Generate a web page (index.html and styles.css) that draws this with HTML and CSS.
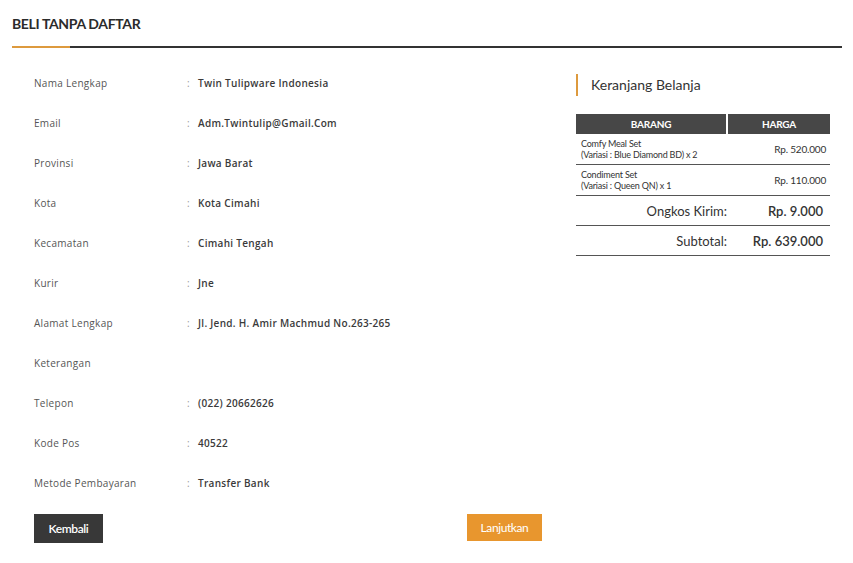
FILE: index.html
```html
<!DOCTYPE html>
<html>
  <head>
    <meta charset="utf-8">
    <title>Beli Tanpa Daftar</title>
    <link rel="stylesheet" href="styles.css">
  </head>
  <body>
    <div class="page">
      <!-- judul -->
      <div class="title-bar">
        <h2>BELI TANPA DAFTAR</h2>
        <div class="rule"><span class="rule-accent"></span><span class="rule-rest"></span></div>
      </div>

      <div class="content">
        <!-- data pembeli -->
        <div class="form-col">
          <div class="row"><span class="label">Nama Lengkap</span><span class="colon">:</span><span class="value">Twin Tulipware Indonesia</span></div>
          <div class="row"><span class="label">Email</span><span class="colon">:</span><span class="value">Adm.Twintulip@Gmail.Com</span></div>
          <div class="row"><span class="label">Provinsi</span><span class="colon">:</span><span class="value">Jawa Barat</span></div>
          <div class="row"><span class="label">Kota</span><span class="colon">:</span><span class="value">Kota Cimahi</span></div>
          <div class="row"><span class="label">Kecamatan</span><span class="colon">:</span><span class="value">Cimahi Tengah</span></div>
          <div class="row"><span class="label">Kurir</span><span class="colon">:</span><span class="value">Jne</span></div>
          <div class="row"><span class="label">Alamat Lengkap</span><span class="colon">:</span><span class="value">Jl. Jend. H. Amir Machmud No.263-265</span></div>
          <div class="row"><span class="label">Keterangan</span></div>
          <div class="row"><span class="label">Telepon</span><span class="colon">:</span><span class="value">(022) 20662626</span></div>
          <div class="row"><span class="label">Kode Pos</span><span class="colon">:</span><span class="value">40522</span></div>
          <div class="row"><span class="label">Metode Pembayaran</span><span class="colon">:</span><span class="value">Transfer Bank</span></div>

          <div class="actions">
            <a href="#" class="btn btn-dark">Kembali</a>
            <a href="#" class="btn btn-orange">Lanjutkan</a>
          </div>
        </div>

        <!-- keranjang -->
        <div class="cart-col">
          <h3 class="cart-title">Keranjang Belanja</h3>
          <table class="cart">
            <thead>
              <tr><th class="col-item">BARANG</th><th class="col-price">HARGA</th></tr>
            </thead>
            <tbody>
              <tr class="item">
                <td>Comfy Meal Set<br>(Variasi : Blue Diamond BD) x 2</td>
                <td class="price">Rp. 520.000</td>
              </tr>
              <tr class="item">
                <td>Condiment Set<br>(Variasi : Queen QN) x 1</td>
                <td class="price">Rp. 110.000</td>
              </tr>
              <tr class="sum">
                <td>Ongkos Kirim:</td>
                <td class="price">Rp. 9.000</td>
              </tr>
              <tr class="sum">
                <td>Subtotal:</td>
                <td class="price">Rp. 639.000</td>
              </tr>
            </tbody>
          </table>
        </div>
      </div>
    </div>
  </body>
</html>
```

FILE: styles.css
```css
/* reset */

body {
  margin: 0;
  background-color: #fff;
  color: #333;
  font-family: Lato, 'Open Sans', sans-serif;
}
a {
  text-decoration: none;
}

.page {
  width: 830px;
  margin-left: 12px;
}

/* judul */

.title-bar h2 {
  margin: 0;
  padding: 14px 0 12px 0;
  font-size: 14px;
  line-height: 20px;
  font-weight: 700;
  color: #2b2b2b;
  letter-spacing: -0.35px;
}
.rule {
  display: flex;
  height: 2px;
}
.rule-accent {
  width: 58px;
  background-color: #dd9a3e;
}
.rule-rest {
  flex: 1;
  background-color: #333;
}

.content {
  display: flex;
  gap: 34px;
  padding-top: 15px;
}

/* data pembeli */

.form-col {
  width: 508px;
  padding-left: 22px;
}
.row {
  display: flex;
  align-items: center;
  height: 40px;
  font-family: 'Open Sans', sans-serif;
  font-size: 10px;
}
.label {
  width: 153px;
  color: #555;
  letter-spacing: 0.3px;
}
.colon {
  width: 11px;
  color: #999;
}
.value {
  color: #3a3a3a;
  font-weight: 600;
  letter-spacing: 0.3px;
}

.actions {
  display: flex;
  justify-content: space-between;
  align-items: flex-start;
  margin-top: 11px;
}
.btn {
  display: block;
  color: #fff;
  font-size: 12px;
  text-align: center;
  letter-spacing: -0.4px;
}
.btn-dark {
  width: 69px;
  height: 29px;
  line-height: 29px;
  background-color: #383838;
  font-weight: 600;
}
.btn-orange {
  width: 75px;
  height: 27px;
  line-height: 27px;
  background-color: #e8962e;
}

/* keranjang */

.cart-col {
  width: 254px;
}
.cart-title {
  margin: 11px 0 0 0;
  padding-left: 13px;
  border-left: 2px solid #dd9a3e;
  height: 22px;
  line-height: 22px;
  font-size: 14px;
  font-weight: 400;
  color: #333;
}
.cart {
  width: 100%;
  margin-top: 18px;
  border-collapse: collapse;
}
.cart th {
  height: 20px;
  padding: 0;
  background-color: #474747;
  color: #fff;
  font-size: 10px;
  font-weight: 700;
  letter-spacing: -0.2px;
}
.cart .col-item {
  width: 150px;
  border-right: 2px solid #fff;
}
.cart td {
  border-bottom: 1px solid #555;
  padding: 0 4px 0 5px;
}
.item td {
  height: 30px;
  font-size: 9px;
  line-height: 11px;
  letter-spacing: -0.2px;
  color: #333;
}
.item .price {
  font-size: 10px;
  text-align: right;
}
.sum td {
  height: 29px;
  font-size: 13px;
  text-align: right;
  color: #333;
}
.sum .price {
  padding-right: 7px;
  font-weight: 600;
}
.sum td:first-child {
  padding-right: 0;
}
```
